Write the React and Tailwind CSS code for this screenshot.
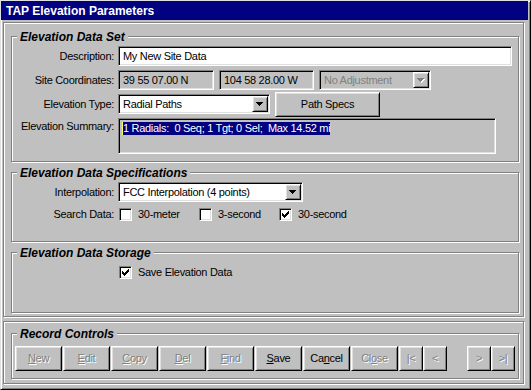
const sunken = "border border-t-[#808080] border-l-[#808080] border-r-white border-b-white shadow-[inset_1px_1px_0_#000,inset_-1px_-1px_0_#dfdfdf]"
const raised = "border border-t-white border-l-white border-r-black border-b-black shadow-[inset_1px_1px_0_#dfdfdf,inset_-1px_-1px_0_#808080]"
const etched = "border border-[#808080] shadow-[inset_1px_1px_0_#fff,1px_1px_0_#fff]"

function Arrow({ disabled }) {
  const d = "M0 0h7v1h-1v1h-1v1h-1v1h-1v-1h-1v-1h-1v-1h-1z"
  return (
    <svg width="8" height="5" viewBox="0 0 8 5" shapeRendering="crispEdges">
      {disabled && <path d={d} fill="#fff" transform="translate(1 1)" />}
      <path d={d} fill={disabled ? '#808080' : '#000'} />
    </svg>
  )
}

function Combo({ className, value, disabled }) {
  return (
    <div className={`flex items-center h-[20px] py-[1px] pr-[1px] pl-[4px] ${sunken} ${disabled ? 'bg-[#c0c0c0] text-[#808080]' : 'bg-white'} ${className}`}>
      <span className="flex-1 truncate">{value}</span>
      <div className={`w-[16px] h-[16px] flex items-center justify-center bg-[#c0c0c0] ${raised}`}>
        <Arrow disabled={disabled} />
      </div>
    </div>
  )
}

function Check({ checked }) {
  return (
    <div className={`w-[13px] h-[13px] shrink-0 bg-white flex items-center justify-center ${sunken}`}>
      {checked && (
        <svg width="7" height="7" viewBox="0 0 7 7" shapeRendering="crispEdges">
          <path d="M6 0h1v1h-1z M5 1h2v1h-2z M0 2h1v1h-1z M4 2h3v1h-3z M0 3h2v1h-2z M3 3h3v1h-3z M0 4h5v1h-5z M1 5h3v1h-3z M2 6h1v1h-1z" fill="#000" />
        </svg>
      )}
    </div>
  )
}

function Group({ title, className, children }) {
  return (
    <div className={`relative ${etched} ${className}`}>
      <span className="absolute left-[5px] top-[-7px] px-[3px] bg-[#c0c0c0] text-[12px] leading-[14px] font-bold italic tracking-normal">{title}</span>
      {children}
    </div>
  )
}

function Btn({ className, disabled, children }) {
  return (
    <div className={`h-[25px] flex items-center justify-center bg-[#c0c0c0] ${raised} ${disabled ? 'text-[#808080] [text-shadow:1px_1px_0_#fff]' : 'text-black'} ${className}`}>
      {children}
    </div>
  )
}

export default function App() {
  return (
    <div className="w-[531px] h-[390px] overflow-hidden bg-[#c0c0c0] font-['Liberation_Sans',Arial,sans-serif] text-[11px] tracking-[-0.3px] text-black border border-t-[#dfdfdf] border-l-[#dfdfdf] border-r-black border-b-black shadow-[inset_1px_1px_0_#fff,inset_-1px_-1px_0_#808080] flex flex-col">
      {/* title bar */}
      <div className="h-[19px] mr-[2px] bg-[#000080] text-white text-[12px] font-bold tracking-normal flex items-center pl-[5px]">
        TAP Elevation Parameters
      </div>

      {/* main panel */}
      <div className={`mt-[2px] ml-[2px] w-[521px] h-[295px] ${etched} pt-[13px] pl-[7px] pr-[4px]`}>
        <Group title="Elevation Data Set" className="h-[126px] pt-[9px]">
          <div className="flex items-center h-[20px]">
            <span className="w-[102px] text-right">Description:</span>
            <div className={`ml-[4px] w-[394px] h-[20px] flex items-center pl-[4px] bg-white ${sunken}`}>My New Site Data</div>
          </div>
          <div className="flex items-center h-[20px] mt-[4px]">
            <span className="w-[102px] text-right">Site Coordinates:</span>
            <div className={`ml-[4px] w-[96px] h-[20px] flex items-center pl-[4px] ${sunken}`}>39 55 07.00 N</div>
            <div className={`ml-[5px] w-[95px] h-[20px] flex items-center pl-[4px] ${sunken}`}>104 58 28.00 W</div>
            <Combo className="ml-[5px] w-[112px]" value="No Adjustment" disabled />
          </div>
          <div className="flex items-center h-[20px] mt-[4px]">
            <span className="w-[102px] text-right">Elevation Type:</span>
            <Combo className="ml-[4px] w-[152px]" value="Radial Paths" />
            <Btn className="ml-[5px] w-[105px] h-[20px]">Path Specs</Btn>
          </div>
          <div className="flex items-start h-[36px] mt-[4px]">
            <span className="w-[102px] text-right pt-[2px] leading-[13px]">Elevation Summary:</span>
            <div className={`ml-[4px] w-[378px] h-[36px] pl-[3px] pt-[1px] ${sunken}`}>
              <span className="inline-block leading-[13px] bg-[#000080] text-white whitespace-pre border-l border-l-[#ffff60]">1 Radials:  0 Seq; 1 Tgt; 0 Sel;  Max 14.52 mi</span>
            </div>
          </div>
        </Group>

        <Group title="Elevation Data Specifications" className="mt-[10px] h-[70px] pt-[9px]">
          <div className="flex items-center h-[20px]">
            <span className="w-[102px] text-right">Interpolation:</span>
            <Combo className="ml-[4px] w-[185px]" value="FCC Interpolation (4 points)" />
          </div>
          <div className="flex items-center h-[16px] mt-[4px]">
            <span className="w-[102px] text-right">Search Data:</span>
            <div className="ml-[5px] w-[80px] flex items-center gap-[6px]"><Check /><span>30-meter</span></div>
            <div className="w-[80px] flex items-center gap-[6px]"><Check /><span>3-second</span></div>
            <div className="w-[80px] flex items-center gap-[6px]"><Check checked /><span>30-second</span></div>
          </div>
        </Group>

        <Group title="Elevation Data Storage" className="mt-[10px] h-[61px] pt-[11px]">
          <div className="flex items-center h-[16px]">
            <div className="ml-[107px] flex items-center gap-[6px]"><Check checked /><span>Save Elevation Data</span></div>
          </div>
        </Group>
      </div>

      {/* record panel */}
      <div className={`mt-[4px] ml-[2px] w-[521px] h-[63px] ${etched} pt-[11px] pl-[7px] pr-[4px]`}>
        <Group title="Record Controls" className="h-[46px] pt-[12px] pl-[3px]">
          <div className="flex">
            <Btn className="w-[47px] mr-[1px]" disabled><span><u>N</u>ew</span></Btn>
            <Btn className="w-[47px] mr-[1px]" disabled><span><u>E</u>dit</span></Btn>
            <Btn className="w-[47px] mr-[1px]" disabled><span><u>C</u>opy</span></Btn>
            <Btn className="w-[47px] mr-[1px]" disabled><span><u>D</u>el</span></Btn>
            <Btn className="w-[47px] mr-[1px]" disabled><span><u>F</u>ind</span></Btn>
            <Btn className="w-[47px] mr-[1px]"><span><u>S</u>ave</span></Btn>
            <Btn className="w-[47px] mr-[1px]"><span>Ca<u>n</u>cel</span></Btn>
            <Btn className="w-[47px] mr-[1px]" disabled><span>Cl<u>o</u>se</span></Btn>
            <Btn className="w-[24px]" disabled>|&lt;</Btn>
            <Btn className="w-[24px]" disabled>&lt;</Btn>
            <Btn className="w-[24px] ml-[20px]" disabled>&gt;</Btn>
            <Btn className="w-[24px]" disabled>&gt;|</Btn>
          </div>
        </Group>
      </div>
    </div>
  )
}
